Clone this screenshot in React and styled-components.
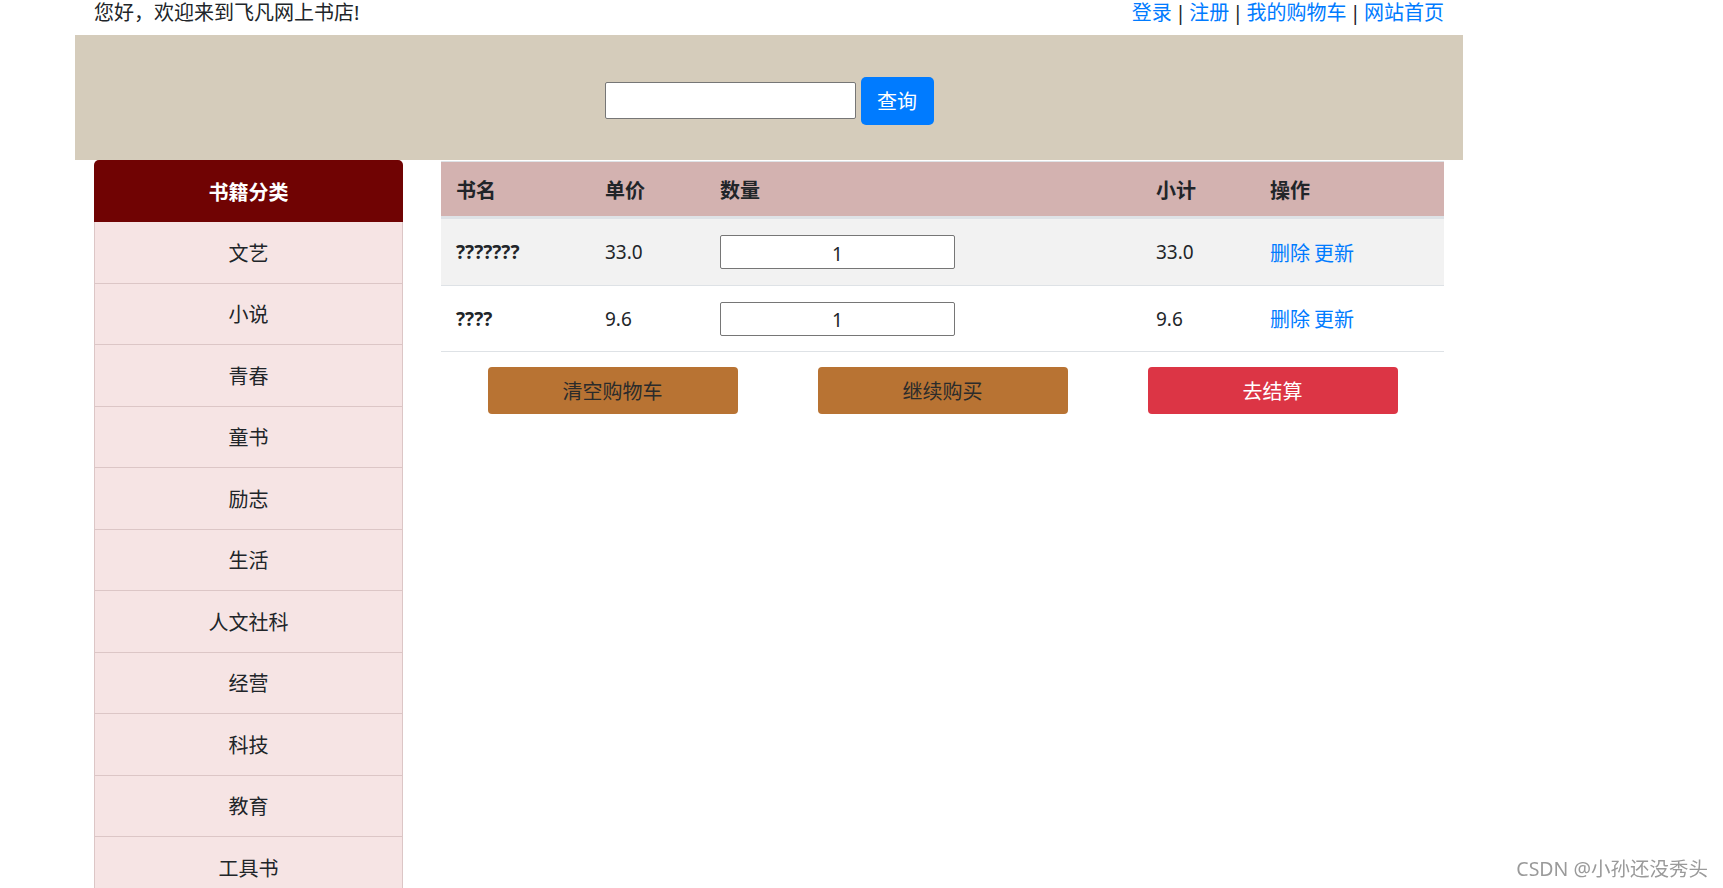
import React from 'react'
import styled, { createGlobalStyle } from 'styled-components'

const GlobalStyle = createGlobalStyle`
  html, body {
    margin: 0;
    padding: 0;
    overflow: hidden;
    background: #fff;
  }
  body {
    font-family: "Noto Sans", "Noto Sans CJK SC", sans-serif;
    color: #212529;
    font-size: 20px;
  }
`

const Page = styled.div`
  width: 1388px;
  margin-left: 75px;
`

const TopBar = styled.div`
  height: 35px;
  display: flex;
  justify-content: space-between;
  align-items: flex-start;
  padding: 0 19px;
  font-size: 20px;
  line-height: 25px;
`

const Welcome = styled.span`
  color: #212529;
`

const Links = styled.div`
  color: #212529;
  a {
    color: #007bff;
    text-decoration: none;
  }
`

const Sep = styled.span`
  margin: 0 -2px;
`

const Banner = styled.div`
  height: 125px;
  background: #d5ccbb;
  display: flex;
  justify-content: center;
  align-items: center;
  gap: 5px;
  padding-top: 6px;
  box-sizing: border-box;
`

const SearchInput = styled.input`
  width: 251px;
  height: 37px;
  box-sizing: border-box;
  border: 1px solid #767676;
  border-radius: 2px;
  background: #fff;
  font-size: 18px;
  padding: 0 6px;
`

const SearchButton = styled.button`
  width: 73px;
  height: 48px;
  border: none;
  border-radius: 5px;
  background: #007bff;
  color: #fff;
  font-family: inherit;
  font-size: 20px;
  cursor: pointer;
`

const Main = styled.div`
  display: flex;
  align-items: flex-start;
  gap: 38px;
  padding: 0 19px;
`

const Sidebar = styled.div`
  width: 309px;
  flex-shrink: 0;
`

const SideHead = styled.div`
  height: 62px;
  background: #700303;
  color: #fff;
  font-weight: 700;
  font-size: 20px;
  display: flex;
  align-items: center;
  justify-content: center;
  border-radius: 5px 5px 0 0;
`

const SideItem = styled.div`
  height: 61.5px;
  box-sizing: border-box;
  background: #f6e4e4;
  border: 1px solid #dcc6c6;
  border-top: none;
  display: flex;
  align-items: center;
  justify-content: center;
  font-size: 20px;
  color: #212529;
`

const Content = styled.div`
  flex: 1;
  padding-top: 1px;
`

const Row = styled.div`
  display: grid;
  grid-template-columns: 149px 115px 436px 114px 1fr;
  align-items: center;
  background: ${p => p.$bg || '#fff'};
  border-bottom: ${p => p.$head ? '3px' : '1px'} solid #dee2e6;
  height: ${p => p.$h}px;
  box-sizing: border-box;
  border-top: ${p => p.$head ? '1px solid #dee2e6' : 'none'};
`

const Cell = styled.div`
  padding: 0 15px;
  font-size: ${p => p.$size || 19}px;
  font-weight: ${p => p.$bold ? 700 : 400};
  color: #212529;
`

const QtyInput = styled.input`
  width: 235px;
  height: 34px;
  box-sizing: border-box;
  border: 1px solid #767676;
  border-radius: 2px;
  text-align: center;
  font-family: inherit;
  font-size: 19px;
  color: #212529;
  padding-top: 4px;
`

const Action = styled.a`
  color: #007bff;
  text-decoration: none;
  font-size: 20px;
  margin-right: 4px;
`

const Buttons = styled.div`
  display: flex;
  justify-content: center;
  gap: 80px;
  padding-top: 15px;
`

const Btn = styled.button`
  width: 250px;
  height: 47px;
  border: none;
  border-radius: 4px;
  background: ${p => p.$danger ? '#dc3545' : '#b87333'};
  color: ${p => p.$danger ? '#fff' : '#2b2b2b'};
  font-family: inherit;
  font-size: 20px;
  cursor: pointer;
`

const Watermark = styled.div`
  position: fixed;
  right: 15px;
  bottom: 6px;
  color: #9a9a9a;
  font-size: 19.5px;
`

const categories = ['文艺', '小说', '青春', '童书', '励志', '生活', '人文社科', '经营', '科技', '教育', '工具书']

const items = [
  { name: '???????', price: '33.0', qty: 1, total: '33.0' },
  { name: '????', price: '9.6', qty: 1, total: '9.6' },
]

const App = () => {
  return <>
    <GlobalStyle />
    <Page>
      <TopBar>
        <Welcome>您好，欢迎来到飞凡网上书店!</Welcome>
        <Links>
          <a href="#">登录</a><Sep> | </Sep><a href="#">注册</a><Sep> | </Sep><a href="#">我的购物车</a><Sep> | </Sep><a href="#">网站首页</a>
        </Links>
      </TopBar>
      <Banner>
        <SearchInput type="text" />
        <SearchButton>查询</SearchButton>
      </Banner>
      <Main>
        <Sidebar>
          <SideHead>书籍分类</SideHead>
          {categories.map(c => <SideItem key={c}>{c}</SideItem>)}
        </Sidebar>
        <Content>
          <Row $head $bg="#d3b2b0" $h={58}>
            <Cell $bold $size={20}>书名</Cell>
            <Cell $bold $size={20}>单价</Cell>
            <Cell $bold $size={20}>数量</Cell>
            <Cell $bold $size={20}>小计</Cell>
            <Cell $bold $size={20}>操作</Cell>
          </Row>
          {items.map((it, i) => (
            <Row key={i} $bg={i % 2 === 0 ? '#f2f2f2' : '#fff'} $h={i === 0 ? 67 : 66}>
              <Cell $bold>{it.name}</Cell>
              <Cell>{it.price}</Cell>
              <Cell><QtyInput type="text" defaultValue={it.qty} /></Cell>
              <Cell>{it.total}</Cell>
              <Cell><Action href="#">删除</Action><Action href="#">更新</Action></Cell>
            </Row>
          ))}
          <Buttons>
            <Btn>清空购物车</Btn>
            <Btn>继续购买</Btn>
            <Btn $danger>去结算</Btn>
          </Buttons>
        </Content>
      </Main>
    </Page>
    <Watermark>CSDN @小孙还没秀头</Watermark>
  </>
}

export default App
